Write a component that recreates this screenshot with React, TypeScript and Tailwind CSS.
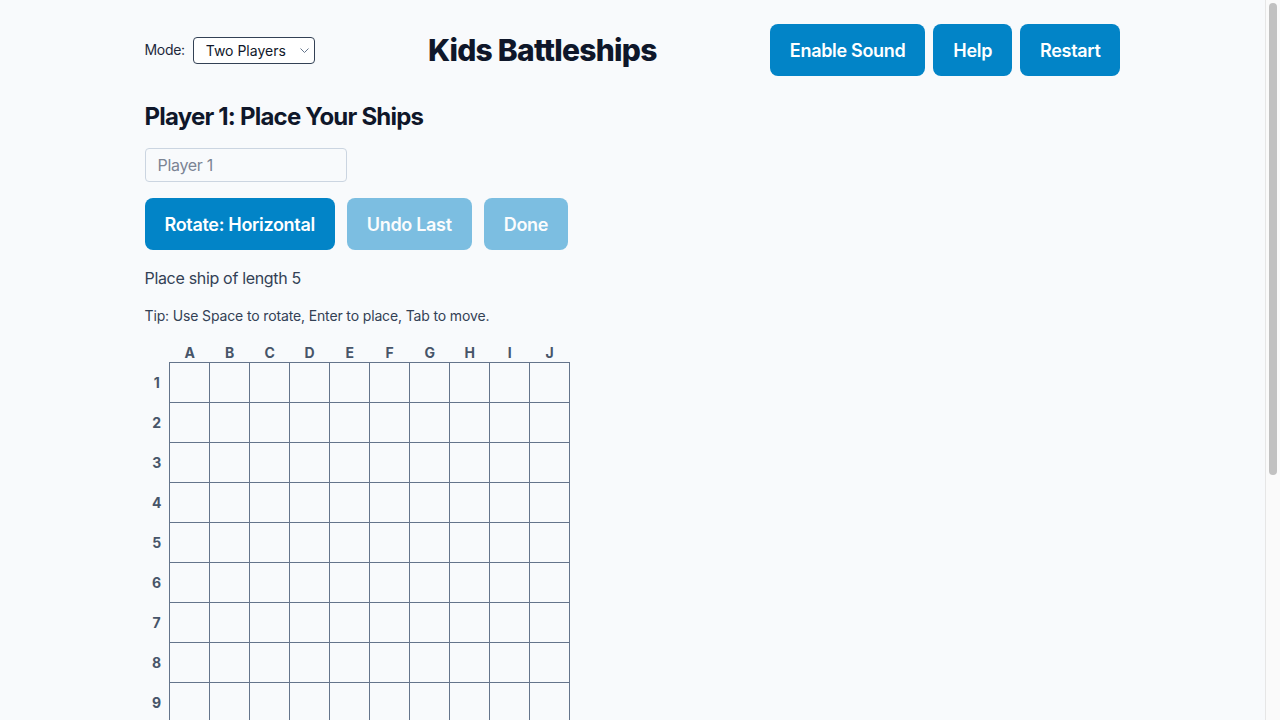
import React from "react";

const cols = ["A", "B", "C", "D", "E", "F", "G", "H", "I", "J"];
const rows = [1, 2, 3, 4, 5, 6, 7, 8, 9, 10];

const btn =
  "rounded-lg bg-[#0284c7] px-5 pb-[11px] pt-[13px] text-lg font-semibold leading-7 text-white";

export default function App() {
  return (
    <div
      className="flex h-screen bg-[#f8fafc] tracking-[-0.02em] text-[#0f172a]"
      style={{ fontFamily: "Inter, 'Noto Sans', sans-serif" }}
    >
      <div className="h-full flex-1 overflow-y-auto">
        <div className="mx-auto max-w-5xl px-6 pb-[335px]">
          <header className="flex items-center justify-between py-6">
            <div className="flex items-center gap-2 text-sm text-[#1e293b]">
              <label htmlFor="mode">Mode:</label>
              <div className="relative">
                <select
                  id="mode"
                  className="h-[27px] w-[122px] appearance-none rounded border border-[#334155] bg-white pl-3 pr-6 pt-px text-[14px] tracking-normal text-[#0f172a]"
                  defaultValue="two"
                >
                  <option value="two">Two Players</option>
                  <option value="one">One Player</option>
                </select>
                <svg
                  className="pointer-events-none absolute right-[6px] top-[11px]"
                  width="9"
                  height="5"
                  viewBox="0 0 9 5"
                  fill="none"
                >
                  <path d="M0.5 0.5L4.5 4.5L8.5 0.5" stroke="#64748b" strokeWidth="1" />
                </svg>
              </div>
            </div>
            <h1 className="text-[30px] font-extrabold leading-9 tracking-[-0.025em] text-[#0f172a]">
              Kids Battleships
            </h1>
            <div className="flex gap-2">
              <button className={btn}>Enable Sound</button>
              <button className={btn}>Help</button>
              <button className={btn}>Restart</button>
            </div>
          </header>

          <section>
            <h2 className="mt-[1px] text-2xl font-bold leading-8 tracking-[-0.033em] text-[#0f172a]">
              Player 1: Place Your Ships
            </h2>
            <input
              type="text"
              placeholder="Player 1"
              className="mt-[15px] block h-[34px] w-[202px] rounded border border-[#cbd5e1] bg-transparent px-3 text-base text-[#0f172a] placeholder:text-[#7b8494]"
            />
            <div className="mt-4 flex gap-3">
              <button className={btn}>Rotate: Horizontal</button>
              <button disabled className={`${btn} opacity-50`}>
                Undo Last
              </button>
              <button disabled className={`${btn} opacity-50`}>
                Done
              </button>
            </div>
            <p className="mt-4 text-base leading-6 text-[#334155]">Place ship of length 5</p>
            <p className="mt-4 text-sm leading-5 tracking-[-0.01em] text-[#334155]">
              Tip: Use Space to rotate, Enter to place, Tab to move.
            </p>

            <div className="mt-4">
              <div className="ml-[25px] grid grid-cols-[repeat(10,40px)] pt-px">
                {cols.map((c) => (
                  <div key={c} className="text-center text-sm font-bold leading-[19px] text-[#475569]">
                    {c}
                  </div>
                ))}
              </div>
              <div className="flex">
                <div className="w-6 pt-px">
                  {rows.map((r) => (
                    <div
                      key={r}
                      className="flex h-10 items-center justify-center text-sm font-bold text-[#475569]"
                    >
                      {r}
                    </div>
                  ))}
                </div>
                <div className="grid grid-cols-[repeat(10,40px)] border-l border-t border-[#64748b]">
                  {rows.map((r) =>
                    cols.map((c) => (
                      <button
                        key={`${c}${r}`}
                        aria-label={`${c}${r}`}
                        className="h-10 w-10 border-b border-r border-[#64748b] bg-transparent"
                      />
                    ))
                  )}
                </div>
              </div>
            </div>
          </section>
        </div>
      </div>
      <div aria-hidden="true" className="h-full w-[15px] shrink-0 border-l border-[#e6e6e6] bg-[#fafafa] pl-[3px] pr-[3px] pt-[3px]">
        <div className="h-[472px] w-2 rounded-full bg-[#c1c1c1]" />
      </div>
    </div>
  );
}
